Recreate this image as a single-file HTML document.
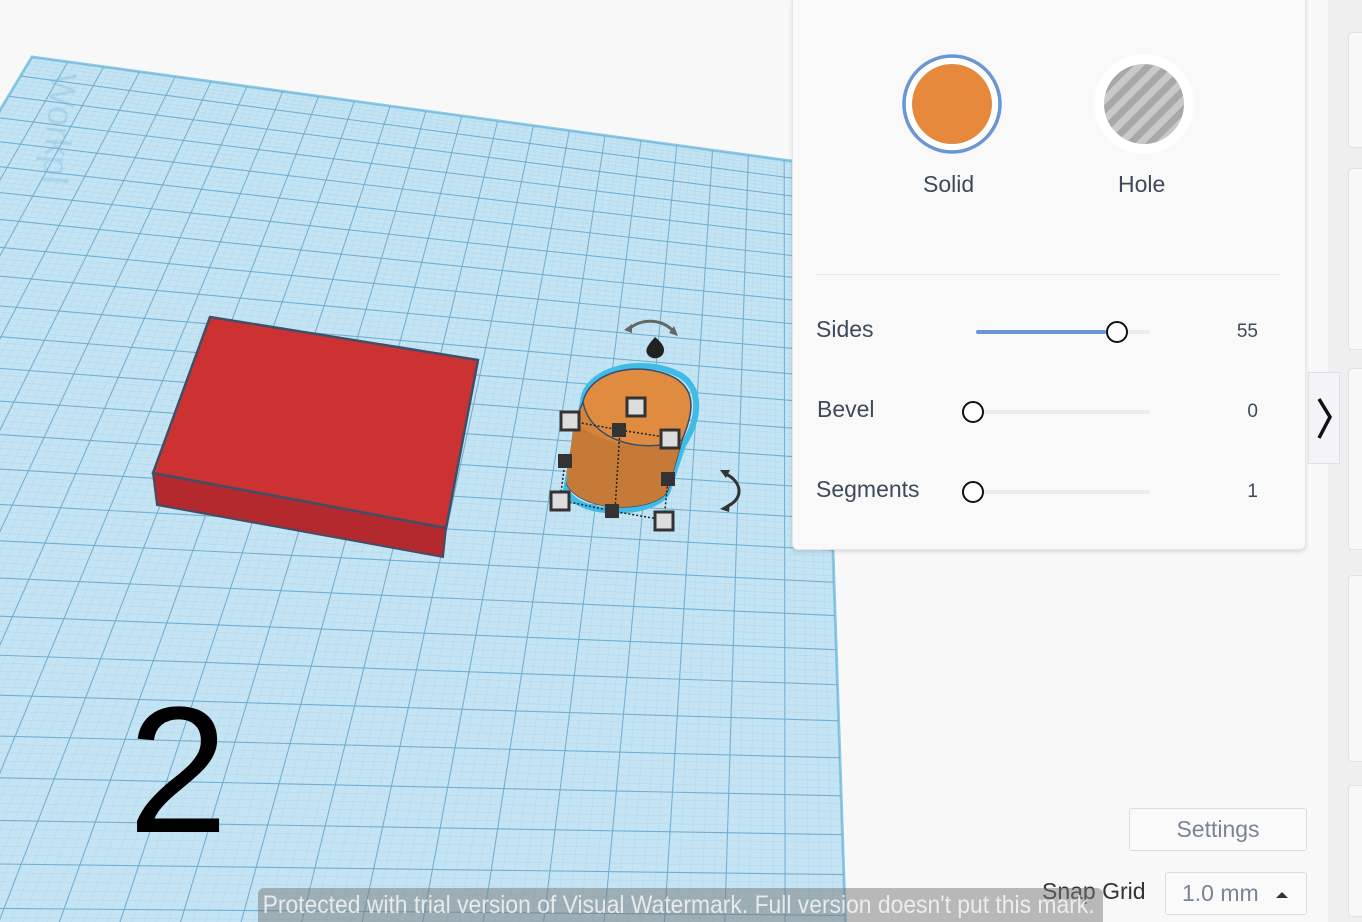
<!DOCTYPE html>
<html><head><meta charset="utf-8"><style>
html,body{margin:0;width:1362px;height:922px;overflow:hidden}
body{background:#f8f8f8;font-family:"Liberation Sans","DejaVu Sans",sans-serif;position:relative}
.abs{position:absolute}
.panel{left:792px;top:-4px;width:512px;height:552px;background:#f9f9f9;border:1px solid #e6e6e6;border-radius:0 0 6px 6px;box-shadow:0 2px 4px rgba(0,0,0,.12)}
.lbl{color:#3d4a5a;font-size:23px}
.num{color:#3d4a5a;font-size:19px;text-align:right;width:40px}
.track{height:4px;background:#ececec;border-radius:2px}
.knob{width:22px;height:22px;border:2px solid #111;border-radius:50%;background:#fff;box-sizing:border-box}
.strip{left:1328px;top:0;width:34px;height:922px;background:#efefef}
.card{left:1348px;width:20px;background:#f8f8f8;border:1px solid #e2e2e2;border-radius:4px}
.btn{background:#fafafa;border:1px solid #dcdcdc;border-radius:3px;color:#7a8594;font-size:23px;text-align:center;box-sizing:border-box}
</style></head><body>
<svg class="abs" style="left:0;top:0" width="1362" height="922" viewBox="0 0 1362 922">
<defs><clipPath id="pc"><polygon points="32,57 820,165 848,1000 -534,1000"/></clipPath></defs>
<polygon points="32,57 820,165 848,1000 -534,1000" fill="#c4e4f3" stroke="#8ccae8" stroke-width="3"/>
<g id="grid" clip-path="url(#pc)"></g>
<text x="0" y="0" transform="translate(52,72) rotate(95)" font-size="36" fill="#7fb8d6" opacity=".35" font-family="Liberation Sans">Workpl</text>
<polygon points="153,473 446,528 443,557 157,505" fill="#b3292d" stroke="#3e4f68" stroke-width="2"/>
<polygon points="210,317 478,360 446,528 153,473" fill="#cc3232" stroke="#3e4f68" stroke-width="2.5"/>
<path d="M583,402 C585,370 640,355 680,375 C705,390 697,425 683,445 L668,490 C660,515 580,520 566,490 Z" fill="none" stroke="#3fbbe8" stroke-width="6"/>
<path d="M583,402 C590,370 640,360 675,378 C700,393 690,420 682,440 L668,490 C658,512 585,515 567,485 L575,420 Z" fill="#d4843c" stroke="#3e4f68" stroke-width="1.5"/>
<path d="M567,470 L575,420 C590,440 640,455 682,440 L668,490 C658,512 585,515 567,485 Z" fill="#c57a38"/>
<path d="M583,402 C590,370 640,360 675,378 C700,393 690,420 682,440 C640,455 590,440 583,402 Z" fill="#e08c40" stroke="#3e4f68" stroke-width="1.5"/>
<g stroke="#222" stroke-width="1.5" stroke-dasharray="2,2" fill="none"><path d="M565,462 L560,500 L612,511 L664,520 L668,480"/><path d="M570,421 L620,430 L670,438"/><path d="M620,430 L615,510"/></g>
<g fill="#333"><rect x="612" y="423" width="14" height="14"/><rect x="558" y="454" width="14" height="14"/><rect x="661" y="472" width="14" height="14"/><rect x="605" y="504" width="14" height="14"/></g>
<g fill="#ddd" stroke="#333" stroke-width="3"><rect x="561" y="412" width="18" height="18"/><rect x="627" y="398" width="18" height="18"/><rect x="661" y="430" width="18" height="18"/><rect x="551" y="492" width="18" height="18"/><rect x="655" y="512" width="18" height="18"/></g>
<path d="M655,337 C648,345 644,350 648,355 C652,360 660,359 663,354 C666,348 662,343 655,337Z" fill="#222"/>
<path d="M628,330 C640,318 662,318 674,332" stroke="#666" stroke-width="3" fill="none"/><path d="M624,330 l8,-6 l0,9z M678,336 l-9,-3 l5,-7z" fill="#666"/>
<path d="M726,474 C742,482 744,498 728,506" stroke="#333" stroke-width="3" fill="none"/><path d="M720,470 l10,0 l-4,8z M720,509 l10,-6 l-1,9z" fill="#333"/>
<text x="128" y="832" font-size="180" fill="#000" font-family="Liberation Sans">2</text>
</svg>
<div class="abs panel"></div>
<svg class="abs" style="left:900px;top:52px" width="300" height="104">
<circle cx="52" cy="52" r="48" fill="#fff" stroke="#6a95d8" stroke-width="3.5"/><circle cx="52" cy="52" r="40" fill="#e6893c"/>
<defs><pattern id="st" width="14" height="14" patternUnits="userSpaceOnUse" patternTransform="rotate(45)"><rect width="14" height="14" fill="#c9c9c9"/><rect width="7" height="14" fill="#a8a8a8"/></pattern></defs>
<circle cx="244" cy="52" r="50" fill="#fff"/><circle cx="244" cy="52" r="40" fill="url(#st)"/>
</svg>
<div class="abs lbl" style="left:923px;top:171px">Solid</div>
<div class="abs lbl" style="left:1118px;top:171px">Hole</div>
<div class="abs" style="left:816px;top:274px;width:464px;height:1px;background:#e8e8e8"></div>
<div class="abs lbl" style="left:816px;top:316px">Sides</div>
<div class="abs lbl" style="left:817px;top:396px">Bevel</div>
<div class="abs lbl" style="left:816px;top:476px">Segments</div>
<div class="abs track" style="left:976px;top:330px;width:174px"></div>
<div class="abs" style="left:976px;top:330px;width:130px;height:4px;background:#6a95d8;border-radius:2px"></div>
<div class="abs knob" style="left:1106px;top:321px"></div>
<div class="abs track" style="left:962px;top:410px;width:188px"></div>
<div class="abs knob" style="left:962px;top:401px"></div>
<div class="abs track" style="left:962px;top:490px;width:188px"></div>
<div class="abs knob" style="left:962px;top:481px"></div>
<div class="abs num" style="left:1218px;top:321px">55</div>
<div class="abs num" style="left:1218px;top:401px">0</div>
<div class="abs num" style="left:1218px;top:481px">1</div>
<div class="abs strip"></div>
<div class="abs card" style="top:32px;height:114px"></div>
<div class="abs card" style="top:168px;height:180px"></div>
<div class="abs card" style="top:368px;height:180px"></div>
<div class="abs card" style="top:575px;height:185px"></div>
<div class="abs card" style="top:785px;height:130px"></div>
<div class="abs" style="left:1308px;top:372px;width:32px;height:92px;background:#f4f4f6;border:1px solid #dde0e6;box-sizing:border-box"></div>
<svg class="abs" style="left:1316px;top:396px" width="20" height="46"><path d="M3,3 L14,21 L3,42" stroke="#111" stroke-width="3.5" fill="none"/></svg>
<div class="abs btn" style="left:1129px;top:808px;width:178px;height:43px;line-height:41px">Settings</div>
<div class="abs" style="left:1042px;top:878px;font-size:23px;color:#333">Snap Grid</div>
<div class="abs btn" style="left:1165px;top:872px;width:142px;height:43px;line-height:41px;text-align:left;padding-left:16px">1.0 mm<span style="position:absolute;right:18px;top:19px;border-left:6px solid transparent;border-right:6px solid transparent;border-bottom:6px solid #333;width:0;height:0"></span></div>
<div class="abs" style="left:258px;top:888px;width:845px;height:34px;background:rgba(120,120,120,.5);border-radius:6px 6px 0 0;overflow:hidden"><div style="color:rgba(255,255,255,.75);font-size:25px;line-height:34px;white-space:nowrap;transform:scaleX(.915);transform-origin:0 0;padding-left:5px">Protected with trial version of Visual Watermark. Full version doesn't put this mark.</div></div>
<script>
var g=document.getElementById('grid'),s='';
function L(a,b,c,d,w,col){s+='<line x1="'+a+'" y1="'+b+'" x2="'+c+'" y2="'+d+'" stroke="'+col+'" stroke-width="'+w+'"/>';}
var TL=[32,57],TR=[820,165],BL=[-534,1000],BR=[848,1000];
function lerp(p,q,t){return[p[0]+(q[0]-p[0])*t,p[1]+(q[1]-p[1])*t];}
var N=110;
for(var i=0;i<=N;i++){var u=i/N,a=lerp(TL,TR,u),b=lerp(BL,BR,u),maj=i%5==0;L(a[0],a[1],b[0],b[1],maj?1.1:0.4,maj?'#72afd2':'#a6d4ea');}
var M=140;
for(var j=0;j<=M;j++){var t=j/M,v=t*(0.55+0.45*t),a=lerp(TL,BL,v),b=lerp(TR,BR,v),maj=j%5==0;L(a[0],a[1],b[0],b[1],maj?1.1:0.4,maj?'#72afd2':'#a6d4ea');}
g.innerHTML=s;
</script>
</body></html>
